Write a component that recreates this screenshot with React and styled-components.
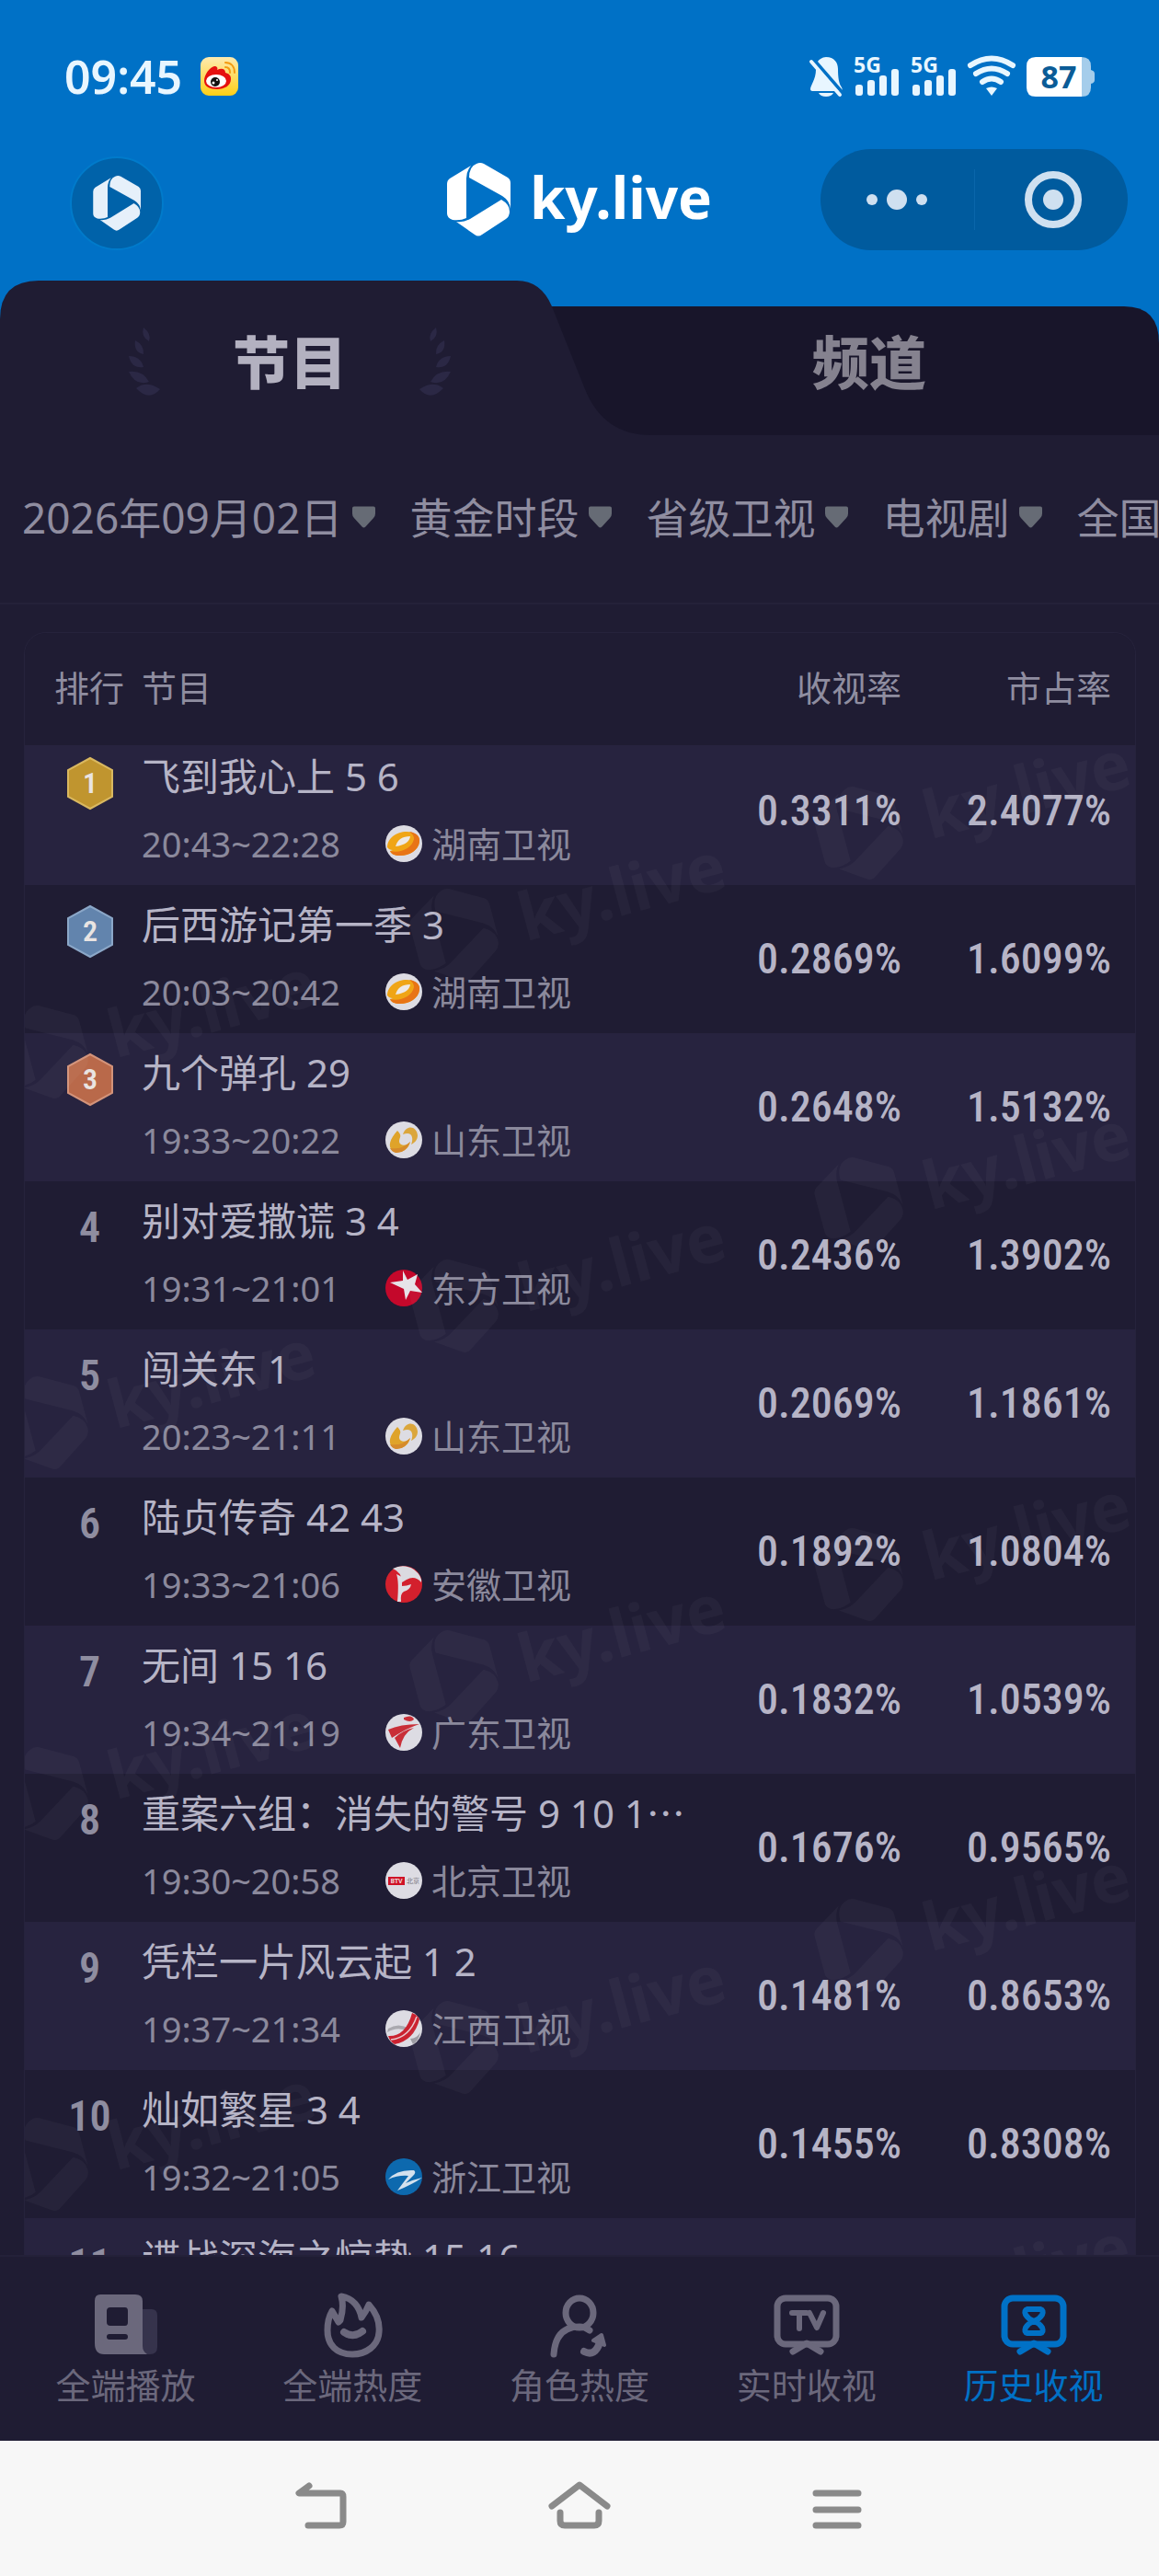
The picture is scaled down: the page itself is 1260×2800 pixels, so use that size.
import React, { useState } from "react";
import styled, { createGlobalStyle } from "styled-components";

const GlobalStyle = createGlobalStyle`
  * {
    box-sizing: border-box;
  }

  body {
    margin: 0;
    background: #1f1c33;
    font-family: "Noto Sans", "Noto Sans CJK SC", sans-serif;
  }

  svg {
    flex-shrink: 0;
    overflow: visible;
  }

  button,
  select {
    margin: 0;
    padding: 0;
    border: none;
    background: none;
    color: inherit;
    font: inherit;
    cursor: pointer;
  }
`;

const Phone = styled.div`
  display: flex;
  flex-direction: column;
  height: 100vh;
  overflow: hidden;
`;

const Top = styled.header`
  background: #0071c6;
`;

const StatusBar = styled.div`
  display: flex;
  align-items: center;
  justify-content: space-between;
  height: 162px;
  padding: 4px 70px 0;
  color: #e8f6ff;
`;

const StatusGroup = styled.div`
  display: flex;
  align-items: center;
  gap: ${(props) => props.$gap};
`;

const Clock = styled.time`
  font-size: 50px;
  line-height: 56px;
  font-weight: 600;
`;

const TitleBar = styled.div`
  display: grid;
  grid-template-columns: 1fr auto 1fr;
  align-items: center;
  padding: 0 34px 33px;
`;

const HomeButton = styled.button`
  display: flex;
  align-items: center;
  justify-content: center;
  align-self: end;
  width: 102px;
  height: 102px;
  margin-left: 42px;
  border: 2px solid #007bcb;
  border-radius: 50%;
  background: #0062a9;
  color: #e6f0fa;
`;

const Brand = styled.h1`
  display: flex;
  align-items: center;
  gap: 20px;
  margin: 0;
  color: #fff;
  font-size: 62px;
  line-height: 80px;
  font-weight: 700;
`;

const BrandName = styled.span`
  padding-bottom: 6px;
`;

const Capsule = styled.div`
  display: flex;
  align-items: center;
  justify-self: end;
  width: 334px;
  height: 110px;
  border-radius: 55px;
  background: #005b9e;
  color: #cfe0f0;
`;

const CapsuleButton = styled.button`
  display: flex;
  flex: 1;
  align-items: center;
  justify-content: center;
  height: 66px;

  & + & {
    border-left: 1px solid #0a66aa;
  }
`;

const TabBar = styled.nav`
  position: relative;
  display: flex;
  height: 168px;
  background: #0071c6;
`;

const TabShape = styled.svg`
  position: absolute;
  inset: 0;
  width: 100%;
  height: 100%;
`;

const Tab = styled.button`
  position: relative;
  display: flex;
  flex: 1;
  align-items: center;
  justify-content: center;
  gap: 78px;
  padding-top: 10px;
  color: ${(props) => (props.$active ? "#b3b1c0" : "#85828f")};
  font-size: 62px;
  line-height: 72px;
  font-weight: 900;
`;

const Filters = styled.div`
  display: flex;
  align-items: center;
  gap: 38px;
  height: 184px;
  padding: 0 0 4px 24px;
  overflow: hidden;
  border-bottom: 2px solid #242139;
  flex-shrink: 0;
`;

const Filter = styled.label`
  display: flex;
  flex-shrink: 0;
  align-items: center;
  gap: 10px;
  color: #8f8da0;
  font-size: 46px;
  line-height: 68px;
`;

const FilterSelect = styled.select`
  appearance: none;
  field-sizing: content;
`;

const Content = styled.main`
  flex: 1;
  min-height: 0;
  overflow: hidden;
  padding: 30px 25px 0 26px;
`;

const Card = styled.div`
  position: relative;
  border: 1px solid #26233c;
  border-radius: 24px 24px 0 0;
`;

const Table = styled.table`
  width: 100%;
  table-layout: fixed;
  border-collapse: separate;
  border-spacing: 0;
`;

const HeadCell = styled.th`
  position: relative;
  width: ${(props) => props.$width};
  height: 113px;
  padding: ${(props) => (props.$right ? "4px 26px 0 0" : "4px 0 0")};
  padding-left: ${(props) => props.$indent || "0"};
  background: #1f1c33;
  box-shadow: 0 9px 0 #1f1c33;
  color: #8f8da0;
  font-size: 38px;
  line-height: 56px;
  font-weight: 400;
  text-align: ${(props) => (props.$right ? "right" : "left")};

  &:first-child {
    border-top-left-radius: 24px;
  }

  &:last-child {
    border-top-right-radius: 24px;
  }
`;

const Row = styled.tr`
  height: 161px;

  &:nth-child(odd) {
    background: #27233f;
  }
`;

const RankCell = styled.td`
  padding: 22px 0 0 14px;
  vertical-align: top;
  text-align: center;
  color: #8f8da0;
  font-family: "Roboto Condensed", "Liberation Sans Narrow", sans-serif;
  font-size: 46px;
  line-height: 56px;
  font-weight: 600;
`;

const ProgramCell = styled.td`
  padding: 14px 0 0;
  vertical-align: top;
`;

const ProgramTitle = styled.div`
  white-space: nowrap;
  color: #b6b4c6;
  font-size: 42px;
  line-height: 58px;
`;

const ProgramMeta = styled.div`
  display: flex;
  align-items: center;
  margin-top: 15px;
  color: #8b899c;
  font-size: 38px;
  line-height: 58px;
`;

const TimeRange = styled.span`
  width: 265px;
`;

const Channel = styled.span`
  display: flex;
  align-items: center;
  gap: 10px;
  white-space: nowrap;
`;

const RateCell = styled.td`
  padding: 0 26px 2px 0;
  text-align: right;
  color: #b6b4c6;
  font-family: "Roboto Condensed", "Liberation Sans Narrow", sans-serif;
  font-size: 46px;
  line-height: 56px;
  font-weight: 500;
`;

const Watermark = styled.svg`
  position: absolute;
  inset: 122px 0 0;
  width: 100%;
  height: calc(100% - 122px);
  overflow: hidden;
  pointer-events: none;
  color: #fff;
  opacity: 0.03;
`;

const BottomNav = styled.nav`
  position: relative;
  display: flex;
  flex-shrink: 0;
  height: 202px;
  padding: 0 13px;
  border-top: 2px solid #242139;
  background: #1f1c33;
`;

const NavLink = styled.a`
  display: flex;
  flex: 1;
  flex-direction: column;
  align-items: center;
  gap: 2px;
  padding-top: 39px;
  color: ${(props) => (props.$active ? "#0071c6" : "#6b687c")};
  font-size: 38px;
  line-height: 56px;
  text-decoration: none;
`;

const SystemBar = styled.footer`
  display: flex;
  flex-shrink: 0;
  align-items: center;
  justify-content: center;
  gap: 212px;
  height: 147px;
  background: #f7f7f7;
  color: #8a8a8a;
`;

const SystemButton = styled.button`
  display: flex;
  align-items: center;
  justify-content: center;
  width: 68px;
  height: 68px;
`;

const LogoPaths = () => (
  <g fill="currentColor">
    <path d="M0 23Q0 19 3 17L26 3Q21 9 21 17V60Q15 63 6 62Q0 60 0 55Z" />
    <path d="M24 16Q24 4 32 1Q36 -1 40 1L66 16Q69 18 69 22V50Q68 41 60 36Z" />
    <path d="M59 40Q68 45 68 53Q68 58 64 61L38 78Q34 81 30 78L10 64Q18 65 25 61Z" />
  </g>
);

const Logo = ({ width, height }) => (
  <svg width={width} height={height} viewBox="0 0 70 80" aria-hidden="true">
    <LogoPaths />
  </svg>
);

const WeiboIcon = () => (
  <svg width="41" height="42" viewBox="0 0 41 42" aria-label="微博">
    <defs>
      <linearGradient id="weibo" x1="0" y1="0" x2="0" y2="1">
        <stop offset="0" stopColor="#fdeab0" />
        <stop offset="1" stopColor="#ffcf16" />
      </linearGradient>
    </defs>
    <rect width="41" height="42" rx="9" fill="url(#weibo)" />
    <path
      d="M4 26C4 19 10 11 15 10C18 10 19 12 18 14C22 12 27 12 27 17C31 18 33 20 33 24C33 31 26 35 18 35C10 35 4 32 4 26Z"
      fill="#e6100e"
    />
    <ellipse cx="17" cy="26" rx="11" ry="7" fill="#fff" />
    <circle cx="16" cy="27" r="5" fill="#111" />
    <circle cx="14" cy="28" r="1.5" fill="#fff" />
    <circle cx="18" cy="25" r="1" fill="#fff" />
    <path
      d="M27 6C33 6 37 10 37 17M27 11C30 11 32 13 32 17"
      fill="none"
      stroke="#f39a10"
      strokeWidth="2"
      strokeLinecap="round"
    />
  </svg>
);

const MuteIcon = () => (
  <svg width="36" height="43" viewBox="0 0 36 43" aria-label="静音">
    <path
      d="M18 0C9 1 7 7 7 14C7 24 1 31 1 35C1 36 2 37 3 37H34C36 37 36 35 35 33C32 29 31 22 31 13C31 6 27 0 18 0Z"
      fill="currentColor"
    />
    <path d="M10 39H26Q24 43 18 43Q12 43 10 39Z" fill="currentColor" />
    <path d="M3 1L36 39" stroke="#0071c6" strokeWidth="4" />
    <path
      d="M2 5L33 41"
      stroke="currentColor"
      strokeWidth="4"
      strokeLinecap="round"
    />
  </svg>
);

const SignalIcon = () => (
  <svg width="50" height="44" viewBox="0 0 50 44" aria-label="5G">
    <text
      x="0"
      y="18"
      fill="currentColor"
      fontFamily="Noto Sans"
      fontSize="23"
      fontWeight="700"
    >
      5G
    </text>
    <g fill="currentColor">
      <rect x="2" y="31" width="8" height="12" rx="3" />
      <rect x="15" y="26" width="8" height="17" rx="3" />
      <rect x="28" y="21" width="8" height="22" rx="3" />
      <rect x="41" y="14" width="8" height="29" rx="3" />
    </g>
  </svg>
);

const WifiIcon = () => (
  <svg width="52" height="44" viewBox="0 0 52 44" aria-label="Wi-Fi">
    <g
      fill="none"
      stroke="currentColor"
      strokeWidth="6"
      strokeLinecap="round"
    >
      <path d="M3 10Q26 -5 49 10" />
      <path d="M9 19Q26 8 43 19" />
      <path d="M16 28Q26 21 36 28" />
    </g>
    <path d="M20 35Q26 32 32 35L26 43Z" fill="currentColor" />
  </svg>
);

const BatteryIcon = () => (
  <svg width="74" height="43" viewBox="0 0 74 43" aria-label="87%">
    <path d="M58 0H60Q70 0 70 10V33Q70 43 60 43H58Z" fill="#a5cdeb" />
    <path d="M70 14Q74 15 74 18V25Q74 28 70 29Z" fill="#a5cdeb" />
    <path d="M60 0V43H10Q0 43 0 33V10Q0 0 10 0Z" fill="#fff" />
    <text
      x="35"
      y="34"
      textAnchor="middle"
      fill="#0b5c97"
      fontFamily="Noto Sans"
      fontSize="34"
      fontWeight="700"
    >
      87
    </text>
  </svg>
);

const Laurel = ({ flip }) => (
  <svg width="36" height="76" viewBox="0 0 36 76" aria-hidden="true">
    <g fill="#2b2845" transform={flip ? "translate(36 0) scale(-1 1)" : ""}>
      <path d="M17 0Q26 7 23 15Q14 10 17 0Z" />
      <path d="M8 14Q18 19 17 29Q6 27 8 14Z" />
      <path d="M1 31Q14 31 17 43Q4 45 1 31Z" />
      <path d="M1 48Q16 46 23 59Q8 64 1 48Z" />
      <path d="M9 66Q20 57 35 67Q23 81 9 66Z" />
    </g>
  </svg>
);

const ArrowIcon = () => (
  <svg width="25" height="24" viewBox="0 0 26 24" aria-hidden="true">
    <path
      d="M2 0H24Q26 0 26 2V8Q26 11 24 13L15 23Q13 25 11 23L2 13Q0 11 0 8V2Q0 0 2 0Z"
      fill="#666b75"
    />
  </svg>
);

const badgeColors = {
  1: ["#c0952f", "#d9b860"],
  2: ["#6284ad", "#8ba7c8"],
  3: ["#b9694a", "#d3937a"],
};

const Badge = ({ rank }) => (
  <svg width="50" height="57" viewBox="0 0 50 57">
    <path
      d="M25 1L49 14V43L25 56L1 43V14Z"
      fill={badgeColors[rank][0]}
      stroke={badgeColors[rank][1]}
      strokeWidth="2"
    />
    <text
      x="25"
      y="39"
      textAnchor="middle"
      fill="#e9e4e2"
      fontFamily="Roboto Condensed, Liberation Sans Narrow"
      fontSize="32"
      fontWeight="600"
    >
      {rank}
    </text>
  </svg>
);

const channelArt = {
  湖南卫视: (
    <>
      <circle cx="20" cy="20" r="20" fill="#dddce3" />
      <path
        d="M2 24C2 14 12 7 23 7C32 7 38 12 37 18C36 27 26 33 16 33C10 33 6 31 5 28L8 27Q4 27 2 24Z"
        fill="#f0a516"
      />
      <path
        d="M37 18C36 27 26 33 16 33C10 33 6 31 5 28C16 31 29 25 31 15Q31 10 26 7Q38 9 37 18Z"
        fill="#e87416"
      />
      <path d="M11 23Q14 12 27 12Q26 21 11 23Z" fill="#eee9e6" />
    </>
  ),
  山东卫视: (
    <>
      <circle cx="20" cy="20" r="20" fill="#dddce3" />
      <path
        d="M13 10C5 19 2 27 8 32C14 36 25 32 27 22C23 27 16 27 15 22C15 17 19 16 13 10Z"
        fill="#dfa32a"
      />
      <path
        d="M19 14C23 3 34 5 35 15C35 20 32 23 28 25C31 18 29 10 19 14Z"
        fill="#dba63c"
      />
      <path
        d="M5 29Q18 31 27 22Q22 35 11 34Q7 33 5 29Z"
        fill="#d58a2c"
      />
    </>
  ),
  东方卫视: (
    <>
      <circle cx="20" cy="20" r="20" fill="#c4082b" />
      <path
        d="M19 1L24 11L35 5L32 16L40 25L27 23L22 33L20 21L5 14L19 12Z"
        fill="#e6e3e8"
      />
    </>
  ),
  安徽卫视: (
    <>
      <circle cx="20" cy="20" r="20" fill="#d3202d" />
      <path
        d="M8 3Q20 -3 31 4Q40 11 39 18Q32 10 23 15L18 18Q18 7 8 3Z"
        fill="#dbdae0"
      />
      <path
        d="M12 9Q15 17 13 39L17 39Q16 30 20 28Q27 26 28 20Q23 22 18 22L18 12Z"
        fill="#dfdce2"
      />
    </>
  ),
  广东卫视: (
    <>
      <circle cx="20" cy="20" r="20" fill="#dddce3" />
      <path d="M20 4Q29 0 31 6Q27 10 20 6Z" fill="#c92f38" />
      <path d="M3 17Q16 11 37 11Q24 15 7 26Z" fill="#c92f38" />
      <path d="M10 26Q18 18 31 15Q19 21 16 37Z" fill="#c92f38" />
    </>
  ),
  北京卫视: (
    <>
      <circle cx="20" cy="20" r="20" fill="#dddce3" />
      <rect x="3" y="16" width="18" height="9" fill="#cf1226" />
      <text
        x="12"
        y="23"
        textAnchor="middle"
        fontSize="7"
        fontWeight="700"
        fill="#eed4d8"
      >
        BTV
      </text>
      <text x="23" y="23" fontSize="7" fill="#77757c">
        北京
      </text>
    </>
  ),
  江西卫视: (
    <>
      <circle cx="20" cy="20" r="20" fill="#dddce3" />
      <path d="M3 20Q14 13 26 20L24 23Q14 17 2 24Z" fill="#aaa9af" />
      <path d="M27 31Q34 31 38 24Q36 34 30 37Z" fill="#9b9aa1" />
      <path
        d="M3 28Q22 29 29 3Q36 6 37 10Q31 33 10 37Q5 34 3 28Z"
        fill="#cb2230"
      />
      <path
        d="M6 32Q26 30 34 7"
        fill="none"
        stroke="#e8c8cd"
        strokeWidth="1.5"
      />
    </>
  ),
  浙江卫视: (
    <>
      <circle cx="20" cy="20" r="20" fill="#0d69ae" />
      <path
        d="M3 23Q12 12 31 13Q34 15 30 19L22 27Q31 23 40 21Q30 28 13 35L25 19Q14 18 3 23Z"
        fill="#d3e1ee"
      />
    </>
  ),
};

const ChannelIcon = ({ name }) => (
  <svg width="40" height="40" viewBox="0 0 40 40" aria-hidden="true">
    {channelArt[name]}
  </svg>
);

const navIcons = {
  play: (
    <>
      <path d="M54 18H64Q70 18 70 25V59Q70 67 62 67H54Z" fill="#36334c" />
      <path
        fillRule="evenodd"
        d="M8 2H46Q54 2 54 9V58Q54 64 59 67H12Q2 67 2 55V9Q2 2 8 2ZM19 16Q15 16 15 20V32Q15 36 19 36H35Q38 36 38 32V20Q38 16 35 16ZM18 45Q15 45 15 48Q15 51 18 51H35Q38 51 38 48Q38 45 35 45Z"
        fill="currentColor"
      />
    </>
  ),
  fire: (
    <g
      fill="none"
      stroke="currentColor"
      strokeWidth="7"
      strokeLinecap="round"
      strokeLinejoin="round"
    >
      <path d="M22 30C25 20 25 11 23 4C36 6 43 16 45 27C49 22 51 18 53 13C62 23 65 33 64 43C63 58 50 67 35 67C18 67 8 57 8 41C8 33 10 25 13 20L20 32Z" />
      <path d="M26 43Q36 50 46 42" strokeWidth="8" />
    </g>
  ),
  role: (
    <g
      fill="none"
      stroke="currentColor"
      strokeWidth="7"
      strokeLinecap="round"
      strokeLinejoin="round"
    >
      <ellipse cx="35" cy="22" rx="15" ry="16" />
      <path d="M7 67Q9 37 35 37Q40 37 46 41" />
      <path d="M40 64Q52 70 57 54" strokeWidth="8" />
      <path d="M50 52L59 46L62 57Z" fill="currentColor" strokeWidth="4" />
    </g>
  ),
  tv: (
    <g
      fill="none"
      stroke="currentColor"
      strokeWidth="7"
      strokeLinecap="round"
      strokeLinejoin="round"
    >
      <rect x="3" y="6" width="64" height="50" rx="9" />
      <path d="M20 64L35 55L50 64" />
      <path d="M19 22H35M27 23V39M38 22L46 38L53 22" strokeWidth="6" />
    </g>
  ),
  history: (
    <g
      fill="none"
      stroke="currentColor"
      strokeWidth="7"
      strokeLinecap="round"
      strokeLinejoin="round"
    >
      <rect x="3" y="6" width="64" height="50" rx="9" />
      <path d="M20 64L35 55L50 64" />
      <path
        d="M28 18H42Q46 19 44 24Q41 29 35 31Q29 29 26 24Q24 19 28 18ZM28 44H42Q46 43 44 38Q41 33 35 31Q29 33 26 38Q24 43 28 44Z"
        strokeWidth="6"
      />
    </g>
  ),
};

const filters = ["2026年09月02日", "黄金时段", "省级卫视", "电视剧", "全国"];

const programs = [
  ["飞到我心上 5 6", "20:43~22:28", "湖南卫视", "0.3311%", "2.4077%"],
  ["后西游记第一季 3", "20:03~20:42", "湖南卫视", "0.2869%", "1.6099%"],
  ["九个弹孔 29", "19:33~20:22", "山东卫视", "0.2648%", "1.5132%"],
  ["别对爱撒谎 3 4", "19:31~21:01", "东方卫视", "0.2436%", "1.3902%"],
  ["闯关东 1", "20:23~21:11", "山东卫视", "0.2069%", "1.1861%"],
  ["陆贞传奇 42 43", "19:33~21:06", "安徽卫视", "0.1892%", "1.0804%"],
  ["无间 15 16", "19:34~21:19", "广东卫视", "0.1832%", "1.0539%"],
  ["重案六组：消失的警号 9 10 1⋯", "19:30~20:58", "北京卫视", "0.1676%", "0.9565%"],
  ["凭栏一片风云起 1 2", "19:37~21:34", "江西卫视", "0.1481%", "0.8653%"],
  ["灿如繁星 3 4", "19:32~21:05", "浙江卫视", "0.1455%", "0.8308%"],
  ["谍战深海之惊蛰 15 16", "", "", "", ""],
];

const navItems = [
  { icon: "play", label: "全端播放" },
  { icon: "fire", label: "全端热度" },
  { icon: "role", label: "角色热度" },
  { icon: "tv", label: "实时收视" },
  { icon: "history", label: "历史收视" },
];

// logo centres of the first watermark line, relative to the table body
const markColumns = [
  [22, 334],
  [468, 207],
  [908, 96],
];

const Marks = () => (
  <Watermark aria-hidden="true">
    {markColumns.map(([x, y]) =>
      [0, 1, 2, 3, 4].map((i) => (
        <g
          key={`${x}-${i}`}
          transform={`translate(${x} ${y + i * 403}) rotate(-15)`}
        >
          <g transform="translate(-45 -52) scale(1.3)">
            <LogoPaths />
          </g>
          <text
            x="72"
            y="26"
            fill="currentColor"
            fontSize="72"
            fontWeight="700"
          >
            ky.live
          </text>
        </g>
      ))
    )}
  </Watermark>
);

const App = () => {
  const [tab, setTab] = useState("节目");

  return (
    <Phone>
      <GlobalStyle />
      <Top>
        <StatusBar>
          <StatusGroup $gap="20px">
            <Clock>09:45</Clock>
            <WeiboIcon />
          </StatusGroup>
          <StatusGroup $gap="12px">
            <MuteIcon />
            <SignalIcon />
            <SignalIcon />
            <WifiIcon />
            <BatteryIcon />
          </StatusGroup>
        </StatusBar>
        <TitleBar>
          <HomeButton aria-label="首页">
            <Logo width="53" height="60" />
          </HomeButton>
          <Brand>
            <Logo width="70" height="80" />
            <BrandName>ky.live</BrandName>
          </Brand>
          <Capsule>
            <CapsuleButton aria-label="更多">
              <svg width="66" height="24" viewBox="0 0 66 24">
                <g fill="currentColor">
                  <circle cx="6" cy="12" r="6" />
                  <circle cx="33" cy="12" r="11" />
                  <circle cx="60" cy="12" r="6" />
                </g>
              </svg>
            </CapsuleButton>
            <CapsuleButton aria-label="关闭">
              <svg width="62" height="62" viewBox="0 0 62 62">
                <circle
                  cx="33"
                  cy="31"
                  r="27"
                  fill="none"
                  stroke="currentColor"
                  strokeWidth="8"
                />
                <circle cx="33" cy="31" r="11" fill="currentColor" />
              </svg>
            </CapsuleButton>
          </Capsule>
        </TitleBar>
      </Top>

      <TabBar>
        <TabShape viewBox="0 0 1260 168" preserveAspectRatio="none">
          <path d="M560 28H1222Q1260 28 1260 68V168H560Z" fill="#18152a" />
          <path
            d="M0 168V42Q0 0 42 0H562Q588 0 600 28L636 118Q656 168 708 168Z"
            fill="#1f1c33"
          />
        </TabShape>
        <Tab $active={tab === "节目"} onClick={() => setTab("节目")}>
          <Laurel />
          节目
          <Laurel flip />
        </Tab>
        <Tab $active={tab === "频道"} onClick={() => setTab("频道")}>
          频道
        </Tab>
      </TabBar>

      <Filters>
        {filters.map((item) => (
          <Filter key={item}>
            <FilterSelect aria-label={item}>
              <option>{item}</option>
            </FilterSelect>
            <ArrowIcon />
          </Filter>
        ))}
      </Filters>

      <Content>
        <Card>
          <Table>
            <thead>
              <tr>
                <HeadCell $width="127px" $indent="32px">
                  排行
                </HeadCell>
                <HeadCell>节目</HeadCell>
                <HeadCell $width="240px" $right>
                  收视率
                </HeadCell>
                <HeadCell $width="228px" $right>
                  市占率
                </HeadCell>
              </tr>
            </thead>
            <tbody>
              {programs.map(([title, time, channel, rate, share], index) => (
                <Row key={title}>
                  <RankCell>
                    {index < 3 ? <Badge rank={index + 1} /> : index + 1}
                  </RankCell>
                  <ProgramCell>
                    <ProgramTitle>{title}</ProgramTitle>
                    <ProgramMeta>
                      <TimeRange>{time}</TimeRange>
                      {channel && (
                        <Channel>
                          <ChannelIcon name={channel} />
                          {channel}
                        </Channel>
                      )}
                    </ProgramMeta>
                  </ProgramCell>
                  <RateCell>{rate}</RateCell>
                  <RateCell>{share}</RateCell>
                </Row>
              ))}
            </tbody>
          </Table>
          <Marks />
        </Card>
      </Content>

      <BottomNav>
        {navItems.map(({ icon, label }) => (
          <NavLink key={icon} href={`#${icon}`} $active={icon === "history"}>
            <svg width="70" height="70" viewBox="0 0 70 70" aria-hidden="true">
              {navIcons[icon]}
            </svg>
            {label}
          </NavLink>
        ))}
      </BottomNav>

      <SystemBar>
        <SystemButton aria-label="返回">
          <svg width="60" height="60" viewBox="0 0 60 60">
            <path
              d="M16 5L5 13H50Q53 13 53 17V44Q53 48 49 48H15"
              fill="none"
              stroke="currentColor"
              strokeWidth="7"
              strokeLinecap="round"
              strokeLinejoin="round"
            />
          </svg>
        </SystemButton>
        <SystemButton aria-label="主页">
          <svg width="68" height="60" viewBox="0 0 68 60">
            <path
              d="M4 27L34 4L64 27M13 34V43Q13 48 18 48H50Q55 48 55 43V34"
              fill="none"
              stroke="currentColor"
              strokeWidth="7"
              strokeLinecap="round"
              strokeLinejoin="round"
            />
          </svg>
        </SystemButton>
        <SystemButton aria-label="菜单">
          <svg width="52" height="60" viewBox="0 0 52 60">
            <path
              d="M3 13H49M3 31H49M3 48H49"
              stroke="currentColor"
              strokeWidth="7"
              strokeLinecap="round"
            />
          </svg>
        </SystemButton>
      </SystemBar>
    </Phone>
  );
};

export default App;
